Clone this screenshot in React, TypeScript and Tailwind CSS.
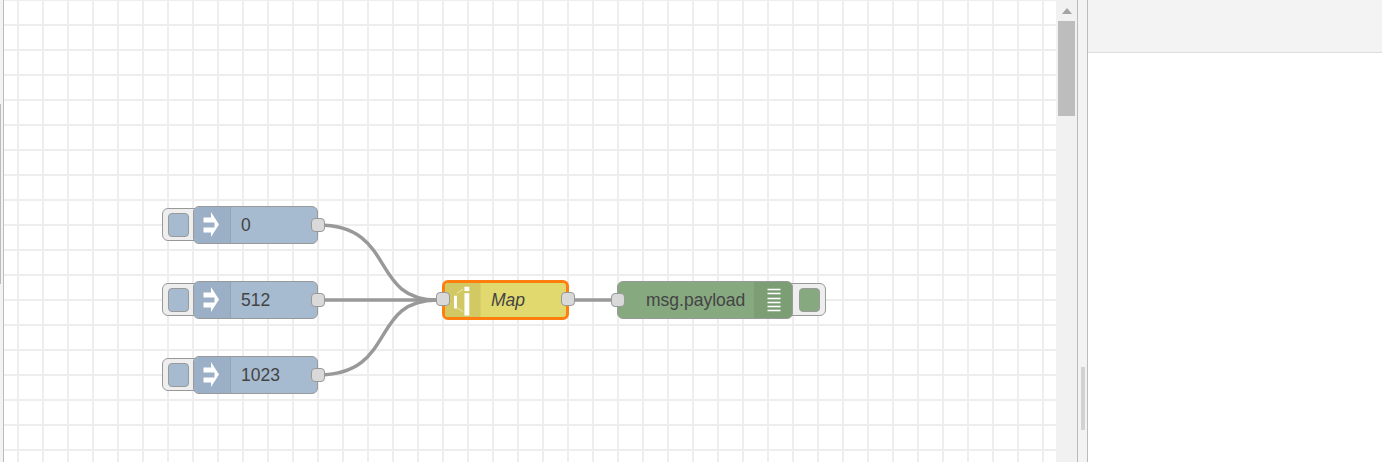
const FONT = "font-['Liberation_Sans',Arial,sans-serif]";

function Port({ className }: { className: string }) {
  return <div className={`absolute top-[12px] h-[14px] w-[14px] rounded-[4px] border border-[#999] bg-[#d9d9d9] ${className}`} />;
}

function ArrowIcon() {
  return (
    <svg viewBox="0 0 36 36" className="h-[36px] w-[36px]">
      <path d="M9.500 10.500H17V5L25 17.500L17 30V25.500H9.500V20.500H20.500V15.500H9.500Z" fill="#fff" />
    </svg>
  );
}

function Inject({ label, top }: { label: string; top: string }) {
  return (
    <div className={`absolute left-[189px] h-[38px] w-[125px] ${top}`}>
      <div className="absolute left-[-31px] top-[2px] flex h-[33px] w-[40px] items-center rounded-[6px] border border-[#999] bg-[#eee] pl-[5px]">
        <div className="h-[24px] w-[21px] rounded-[4px] border border-[#999] bg-[#a6bbcf]" />
      </div>
      <div className="absolute inset-0 flex items-stretch overflow-hidden rounded-[6px] border border-[#999] bg-[#a6bbcf]">
        <div className="flex w-[37px] shrink-0 items-center justify-center border-r border-[#8fa5ba] bg-[#9bb0c6]">
          <ArrowIcon />
        </div>
        <div className="flex flex-1 items-center pl-[10px] text-[17.5px] text-[#444]">{label}</div>
      </div>
      <Port className="right-[-7px]" />
    </div>
  );
}

export default function App() {
  return (
    <div className={`flex h-[462px] w-[1382px] overflow-hidden bg-white ${FONT}`}>
      <div className="relative w-[4px] shrink-0 border-r-[1px] border-[#bbb] bg-[#f3f3f3]">
        <div className="absolute left-0 top-[104px] h-[180px] w-[1px] bg-[#bbb]" />
      </div>

      <div className="relative w-[1052px] shrink-0 bg-white bg-[linear-gradient(to_right,#eee_2px,transparent_2px),linear-gradient(to_bottom,#eee_2px,transparent_2px)] bg-[length:25px_25px] bg-[position:13px_-1px]">
        <svg className="absolute left-0 top-0 h-[462px] w-[1052px]" viewBox="0 0 1052 462" fill="none" stroke="#999" strokeWidth="3.5">
          <path d="M314 225C393 225 365 300 433 300" />
          <path d="M314 300H433" />
          <path d="M314 375C393 375 365 300 433 300" />
          <path d="M564 300H608" />
        </svg>

        <Inject label="0" top="top-[206px]" />
        <Inject label="512" top="top-[281px]" />
        <Inject label="1023" top="top-[356px]" />

        <div className="absolute left-[438px] top-[280px] h-[40px] w-[127px]">
          <div className="absolute inset-0 flex overflow-hidden rounded-[6px] border-[3px] border-[#ff7f0e] bg-[#e2d96e]">
            <div className="flex w-[36px] shrink-0 items-center justify-center border-r border-[#d9cf68] bg-[#d3c964]">
              <svg viewBox="0 0 36 34" className="h-[34px] w-[36px]">
                <path d="M9.300 12.700h3v13h-3zM20 3.300h5v4.400h-5zM20 10h5v23h-5z" fill="#fff" />
                <path d="M12.500 10l6-4M12.500 25l6 4" stroke="#fff" strokeWidth="0.8" fill="none" opacity="0.7" />
              </svg>
            </div>
            <div className="flex flex-1 items-center pl-[10px] text-[17.5px] italic text-[#444]">Map</div>
          </div>
          <Port className="left-[-6px]" />
          <Port className="right-[-6px]" />
        </div>

        <div className="absolute left-[613px] top-[281px] h-[38px] w-[176px]">
          <div className="absolute right-[-33px] top-[2px] flex h-[33px] w-[40px] items-center justify-end rounded-[6px] border border-[#999] bg-[#eee] pr-[5px]">
            <div className="h-[24px] w-[21px] rounded-[4px] border border-[#999] bg-[#87a980]" />
          </div>
          <div className="absolute inset-0 flex items-stretch overflow-hidden rounded-[6px] border border-[#999] bg-[#87a980]">
            <div className="flex flex-1 items-center pl-[28px] text-[17.5px] text-[#444]">msg.payload</div>
            <div className="flex w-[38px] shrink-0 items-center justify-center bg-[#7c9e75]">
              <svg viewBox="0 0 38 36" className="h-[36px] w-[38px]">
                <path d="M13.500 7.500H26.500M13.500 11.500H26.500M13.500 16.500H26.500M13.500 20.500H26.500M13.500 24.500H26.500M13.500 28.500H26.500" stroke="#fff" strokeWidth="1.500" fill="none" />
              </svg>
            </div>
          </div>
          <Port className="left-[-6px]" />
        </div>
      </div>

      <div className="flex w-[21px] shrink-0 flex-col items-center bg-[#f1f1f1]">
        <svg viewBox="0 0 10 6" className="mt-[8px] h-[6px] w-[10px]">
          <path d="M5 0l5 6H0z" fill="#a3a3a3" />
        </svg>
        <div className="mt-[7px] h-[95px] w-[17px] bg-[#bdbdbd]" />
      </div>

      <div className="flex w-[11px] shrink-0 justify-center border-x border-[#bbb] bg-[#f3f3f3] pt-[367px]">
        <div className="h-[63px] w-[4px] bg-[#d2d2d2]" />
      </div>

      <div className="flex-1 bg-white">
        <div className="h-[53px] border-b border-[#ddd] bg-[#f3f3f3]" />
      </div>
    </div>
  );
}
